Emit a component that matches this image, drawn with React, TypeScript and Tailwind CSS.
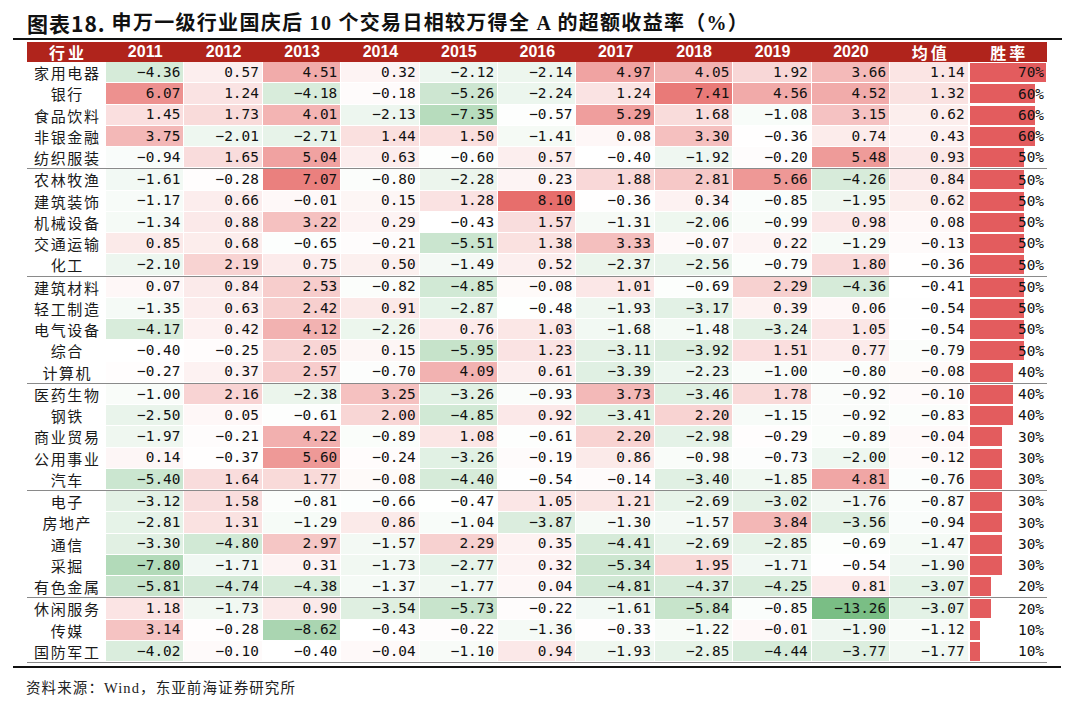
import React from "react";

type Row = [string, number[], number];

const rows: Row[] = [
  ["家用电器", [-4.36, 0.57, 4.51, 0.32, -2.12, -2.14, 4.97, 4.05, 1.92, 3.66, 1.14], 70],
  ["银行", [6.07, 1.24, -4.18, -0.18, -5.26, -2.24, 1.24, 7.41, 4.56, 4.52, 1.32], 60],
  ["食品饮料", [1.45, 1.73, 4.01, -2.13, -7.35, -0.57, 5.29, 1.68, -1.08, 3.15, 0.62], 60],
  ["非银金融", [3.75, -2.01, -2.71, 1.44, 1.5, -1.41, 0.08, 3.3, -0.36, 0.74, 0.43], 60],
  ["纺织服装", [-0.94, 1.65, 5.04, 0.63, -0.6, 0.57, -0.4, -1.92, -0.2, 5.48, 0.93], 50],
  ["农林牧渔", [-1.61, -0.28, 7.07, -0.8, -2.28, 0.23, 1.88, 2.81, 5.66, -4.26, 0.84], 50],
  ["建筑装饰", [-1.17, 0.66, -0.01, 0.15, 1.28, 8.1, -0.36, 0.34, -0.85, -1.95, 0.62], 50],
  ["机械设备", [-1.34, 0.88, 3.22, 0.29, -0.43, 1.57, -1.31, -2.06, -0.99, 0.98, 0.08], 50],
  ["交通运输", [0.85, 0.68, -0.65, -0.21, -5.51, 1.38, 3.33, -0.07, 0.22, -1.29, -0.13], 50],
  ["化工", [-2.1, 2.19, 0.75, 0.5, -1.49, 0.52, -2.37, -2.56, -0.79, 1.8, -0.36], 50],
  ["建筑材料", [0.07, 0.84, 2.53, -0.82, -4.85, -0.08, 1.01, -0.69, 2.29, -4.36, -0.41], 50],
  ["轻工制造", [-1.35, 0.63, 2.42, 0.91, -2.87, -0.48, -1.93, -3.17, 0.39, 0.06, -0.54], 50],
  ["电气设备", [-4.17, 0.42, 4.12, -2.26, 0.76, 1.03, -1.68, -1.48, -3.24, 1.05, -0.54], 50],
  ["综合", [-0.4, -0.25, 2.05, 0.15, -5.95, 1.23, -3.11, -3.92, 1.51, 0.77, -0.79], 50],
  ["计算机", [-0.27, 0.37, 2.57, -0.7, 4.09, 0.61, -3.39, -2.23, -1.0, -0.8, -0.08], 40],
  ["医药生物", [-1.0, 2.16, -2.38, 3.25, -3.26, -0.93, 3.73, -3.46, 1.78, -0.92, -0.1], 40],
  ["钢铁", [-2.5, 0.05, -0.61, 2.0, -4.85, 0.92, -3.41, 2.2, -1.15, -0.92, -0.83], 40],
  ["商业贸易", [-1.97, -0.21, 4.22, -0.89, 1.08, -0.61, 2.2, -2.98, -0.29, -0.89, -0.04], 30],
  ["公用事业", [0.14, -0.37, 5.6, -0.24, -3.26, -0.19, 0.86, -0.98, -0.73, -2.0, -0.12], 30],
  ["汽车", [-5.4, 1.64, 1.77, -0.08, -4.4, -0.54, -0.14, -3.4, -1.85, 4.81, -0.76], 30],
  ["电子", [-3.12, 1.58, -0.81, -0.66, -0.47, 1.05, 1.21, -2.69, -3.02, -1.76, -0.87], 30],
  ["房地产", [-2.81, 1.31, -1.29, 0.86, -1.04, -3.87, -1.3, -1.57, 3.84, -3.56, -0.94], 30],
  ["通信", [-3.3, -4.8, 2.97, -1.57, 2.29, 0.35, -4.41, -2.69, -2.85, -0.69, -1.47], 30],
  ["采掘", [-7.8, -1.71, 0.31, -1.73, -2.77, 0.32, -5.34, 1.95, -1.71, -0.54, -1.9], 30],
  ["有色金属", [-5.81, -4.74, -4.38, -1.37, -1.77, 0.04, -4.81, -4.37, -4.25, 0.81, -3.07], 20],
  ["休闲服务", [1.18, -1.73, 0.9, -3.54, -5.73, -0.22, -1.61, -5.84, -0.85, -13.26, -3.07], 20],
  ["传媒", [3.14, -0.28, -8.62, -0.43, -0.22, -1.36, -0.33, -1.22, -0.01, -1.9, -1.12], 10],
  ["国防军工", [-4.02, -0.1, -0.4, -0.04, -1.1, 0.94, -1.93, -2.85, -4.44, -3.77, -1.77], 10],
];

const headers = ["2011", "2012", "2013", "2014", "2015", "2016", "2017", "2018", "2019", "2020"];

const all = rows.flatMap((r) => r[1]).sort((a, b) => a - b);
const minV = all[0];
const maxV = all[all.length - 1];
const med = (all[all.length / 2 - 1] + all[all.length / 2]) / 2;

function heat(v: number): string {
  const red = [231, 110, 108];
  const green = [122, 190, 133];
  let t: number;
  let c: number[];
  if (v >= med) {
    t = (v - med) / (maxV - med);
    c = red;
  } else {
    t = (med - v) / (med - minV);
    c = green;
  }
  const mix = c.map((x) => Math.round(255 + t * (x - 255)));
  return `rgb(${mix[0]},${mix[1]},${mix[2]})`;
}

function fmt(v: number): string {
  return v.toFixed(2).replace("-", "\u2212");
}

const groups: Row[][] = [];
for (let i = 0; i < rows.length; i += 5) groups.push(rows.slice(i, i + 5));

const cols = "grid grid-cols-[79px_repeat(12,minmax(0,1fr))]";

export default function App() {
  return (
    <div className="w-[1080px] h-[705px] bg-white relative overflow-hidden text-[#111]">
      <div className="pt-[9px] pl-[27px] h-[37px] flex items-center whitespace-nowrap">
        <span className="font-['Noto_Sans_CJK_SC',sans-serif] font-bold text-[21px] tracking-[1px] leading-none">
          图表18.
        </span>
        <span className="ml-[6px] font-['Liberation_Serif','Noto_Sans_CJK_SC',serif] font-bold text-[20px] tracking-[1.3px] leading-none">
          申万一级行业国庆后 10 个交易日相较万得全 A 的超额收益率（%）
        </span>
      </div>
      <div className="ml-[13px] w-[1049px] h-[2px] bg-[#111] mt-[1px]" />
      <div className="ml-[27px] w-[1020px] mt-[2px]">
        <div className={`${cols} h-[20px] bg-[#b0241c] text-white font-bold text-[16px] leading-none`}>
          <div className="flex items-center justify-center font-['Noto_Sans_CJK_SC',sans-serif] tracking-[3px] pl-[3px]">
            行业
          </div>
          {headers.map((h) => (
            <div key={h} className="flex items-center justify-center font-['Liberation_Sans','Noto_Sans_CJK_SC',sans-serif]">
              {h}
            </div>
          ))}
          <div className="flex items-center justify-center font-['Noto_Sans_CJK_SC',sans-serif] tracking-[3px] pl-[3px]">
            均值
          </div>
          <div className="flex items-center justify-center font-['Noto_Sans_CJK_SC',sans-serif] tracking-[3px] pl-[3px]">
            胜率
          </div>
        </div>
        {groups.map((g, gi) => (
          <div key={gi} className="border-b border-[#8a8a8a]">
            {g.map(([name, vals, pct]) => (
              <div key={name} className={`${cols} h-[21.25px]`}>
                <div className="flex items-center justify-center font-['Noto_Sans_CJK_SC',sans-serif] text-[15px] tracking-[1.6px] pl-[1.6px] text-[#1a1a1a] leading-none">
                  {name}
                </div>
                {vals.map((v, i) => (
                  <div
                    key={i}
                    className="flex items-center justify-end pr-[3px] border-r border-b border-white font-['DejaVu_Sans_Mono',monospace] text-[14.4px] leading-none"
                    style={{ backgroundColor: heat(v) }}
                  >
                    {fmt(v)}
                  </div>
                ))}
                <div className="relative flex items-center justify-end pr-[3px] font-['DejaVu_Sans_Mono',monospace] text-[14.4px] leading-none">
                  <div
                    className="absolute left-px top-px bottom-[1.25px] bg-[#e35c5e]"
                    style={{ width: `${pct * 1.086}px` }}
                  />
                  <span className="relative">{pct}%</span>
                </div>
              </div>
            ))}
          </div>
        ))}
      </div>
      <div className="ml-[13px] w-[1048px] h-[2px] bg-[#111] mt-[3px]" />
      <div className="pl-[26px] mt-[13px] text-[14.5px] tracking-[1.1px] text-[#222] leading-none font-['Liberation_Serif','Noto_Sans_CJK_SC',serif]">
        资料来源：Wind，东亚前海证券研究所
      </div>
    </div>
  );
}
